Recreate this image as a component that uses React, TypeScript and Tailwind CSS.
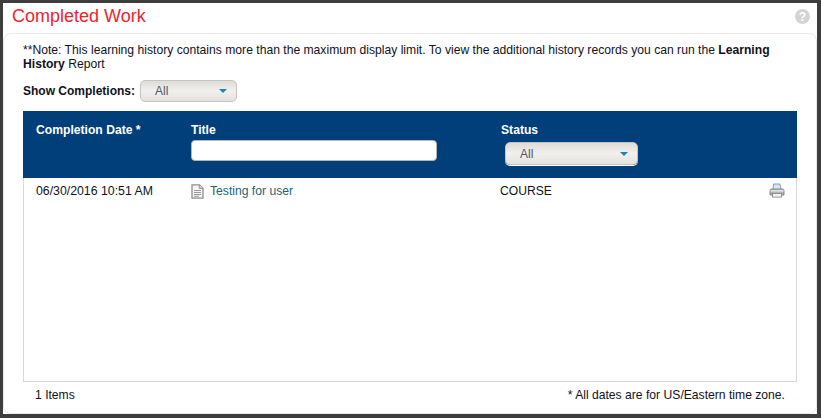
import React from 'react'

function Select({ width, height }: { width: string; height: string }) {
  return (
    <div className={`${width} ${height} flex items-center justify-between rounded-[5px] border border-[#c4c4c0] bg-gradient-to-b from-[#dddcd8] via-[#f1f0ed] to-[#e3e2de] pl-[14px] pr-[9px] text-[12px] text-[#555566] shadow-[0_1px_0_#ffffff]`}>
      <span>All</span>
      <span className="h-0 w-0 border-x-[4px] border-t-[4px] border-x-transparent border-t-[#1b87b8]"></span>
    </div>
  )
}

function DocIcon() {
  return (
    <svg width="13" height="15" viewBox="0 0 13 15" className="shrink-0">
      <path d="M1 .8h7.5L12 4.3v9.9H1z" fill="#f4f4f4" stroke="#8f8f8f" strokeWidth="1.3" />
      <path d="M8.3 1v3.4H12" fill="#dcdcdc" stroke="#8f8f8f" />
      <path d="M3 6.5h7M3 8.5h7M3 10.5h7M3 12.3h5" stroke="#9a9a9a" />
    </svg>
  )
}

function PrintIcon() {
  return (
    <svg width="16" height="15" viewBox="0 0 16 15">
      <path d="M4 6.5 4.6 1h6.2l1.4 5.5z" fill="#d5e6f8" stroke="#6f95c4" strokeWidth="0.9" />
      <path d="M1 7.5Q1 6 2.5 6h11Q15 6 15 7.5V12H1z" fill="#b4b4b4" stroke="#777777" strokeWidth="0.8" />
      <rect x="1.5" y="7" width="13" height="1.6" fill="#e2e2e2" />
      <rect x="3.5" y="10.5" width="9" height="3.6" fill="#f3f3f3" stroke="#808080" strokeWidth="0.8" />
    </svg>
  )
}

export default function App() {
  return (
    <div className="h-[418px] w-[821px] overflow-hidden border-t-[3px] border-r-[4px] border-b-[4px] border-l-[3px] border-[#3d3d3d] bg-white font-['Liberation_Sans',Arial,sans-serif] text-[12.15px] text-[#111122]">
      <div className="flex h-[30px] items-start justify-between pl-[9px] pr-[7px]">
        <h1 className="mt-[2px] text-[18px] leading-[22px] text-[#f0232e]">Completed Work</h1>
        <div className="mt-[6px] flex h-[15px] w-[15px] items-center justify-center rounded-full bg-[#d4d4d4] text-[12px] leading-none font-bold text-white">?</div>
      </div>

      <div className="flex h-[381px] flex-col rounded-[8px] border border-[#e9e9e9] px-[19px] pt-[9px]">
        <p className="leading-[14px]">
          **Note: This learning history contains more than the maximum display limit. To view the additional history records you can run the <b>Learning History</b> Report
        </p>

        <div className="mt-[9px] flex items-center">
          <b className="w-[117px] text-[12px]">Show Completions:</b>
          <Select width="w-[97px]" height="h-[22px]" />
        </div>

        <div className="mt-[9px] flex h-[271px] flex-col border border-[#d8d8d8]">
          <div className="-mx-px -mt-px flex h-[67px] shrink-0 bg-[#003f7a] pt-[10px] font-bold text-white">
            <div className="w-[168px] pl-[13px]">Completion Date *</div>
            <div className="w-[310px]">
              Title
              <div className="mt-[1px] h-[21px] w-[246px] rounded-[4px] border border-[#b5b5b5] bg-white"></div>
            </div>
            <div className="font-bold">
              Status
              <div className="mt-[3px] ml-[4px] font-normal">
                <Select width="w-[133px]" height="h-[23px]" />
              </div>
            </div>
          </div>
          <div className="flex pt-[4px]">
            <div className="w-[167px] pl-[12px] text-[12.3px]">06/30/2016 10:51 AM</div>
            <div className="flex w-[309px] items-center gap-[6px] text-[#1a6478]">
              <DocIcon />
              <span>Testing for user</span>
            </div>
            <div className="flex-1">COURSE</div>
            <div className="pt-[1px] pr-[11px]">
              <PrintIcon />
            </div>
          </div>
        </div>

        <div className="flex justify-between px-[12px] pt-[4px]">
          <span>1 Items</span>
          <span>* All dates are for US/Eastern time zone.</span>
        </div>
      </div>
    </div>
  )
}
